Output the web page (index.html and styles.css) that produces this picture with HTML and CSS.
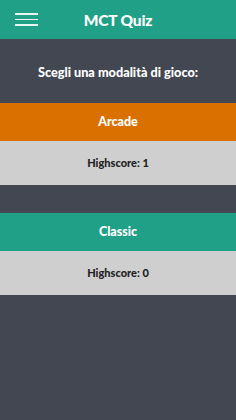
FILE: index.html
```html
<!DOCTYPE html>
<html lang="it">
<head>
    <meta charset="UTF-8">
    <meta name="viewport" content="width=device-width, initial-scale=1.0">
    <title>MCT Quiz</title>
    <link rel="stylesheet" href="styles.css">
</head>
<body>
    <!-- Header -->
    <div class="header">
        <button class="menu-button" aria-label="Menu">
            <span></span>
            <span></span>
            <span></span>
        </button>
        <div class="app-title">MCT Quiz</div>
        <div></div>
    </div>

    <div class="content">
        <div class="intro">Scegli una modalità di gioco:</div>

        <!-- Modes -->
        <div class="mode">
            <a href="#" class="mode-name arcade">Arcade</a>
            <div class="mode-score">Highscore: 1</div>
        </div>

        <div class="mode">
            <a href="#" class="mode-name classic">Classic</a>
            <div class="mode-score">Highscore: 0</div>
        </div>
    </div>
</body>
</html>
```

FILE: styles.css
```css
body {
    margin: 0;
    background-color: #434751;
    font-family: Lato, "Noto Sans", sans-serif;
    font-weight: 900;
    color: #fff;
    min-height: 420px;
}

/* Header */
.header {
    height: 39px;
    background-color: #1fa087;
    display: grid;
    grid-template-columns: 1fr auto 1fr;
    align-items: center;
}

.menu-button {
    justify-self: start;
    margin-left: 15px;
    width: 23px;
    padding: 0;
    background: none;
    border: none;
    display: flex;
    flex-direction: column;
    gap: 4px;
    cursor: pointer;
}

.menu-button span {
    display: block;
    height: 1.5px;
    background-color: #e8f6f2;
}

.app-title {
    font-size: 15.5px;
    letter-spacing: -0.2px;
}

/* Content */
.content {
    display: flex;
    flex-direction: column;
    gap: 28px;
}

.intro {
    font-size: 12.7px;
    text-align: center;
    padding: 25px 0 0 0;
    height: 39px;
    margin-bottom: -28px;
}

.mode {
    display: flex;
    flex-direction: column;
}

.mode-name {
    height: 38px;
    line-height: 38px;
    text-align: center;
    font-size: 12.5px;
    color: #fff;
    text-decoration: none;
}

.arcade {
    background-color: #d97000;
}

.classic {
    background-color: #1fa087;
}

.mode-score {
    height: 44px;
    line-height: 44px;
    text-align: center;
    font-size: 11px;
    color: #222;
    background-color: #cfcfcf;
}
```
